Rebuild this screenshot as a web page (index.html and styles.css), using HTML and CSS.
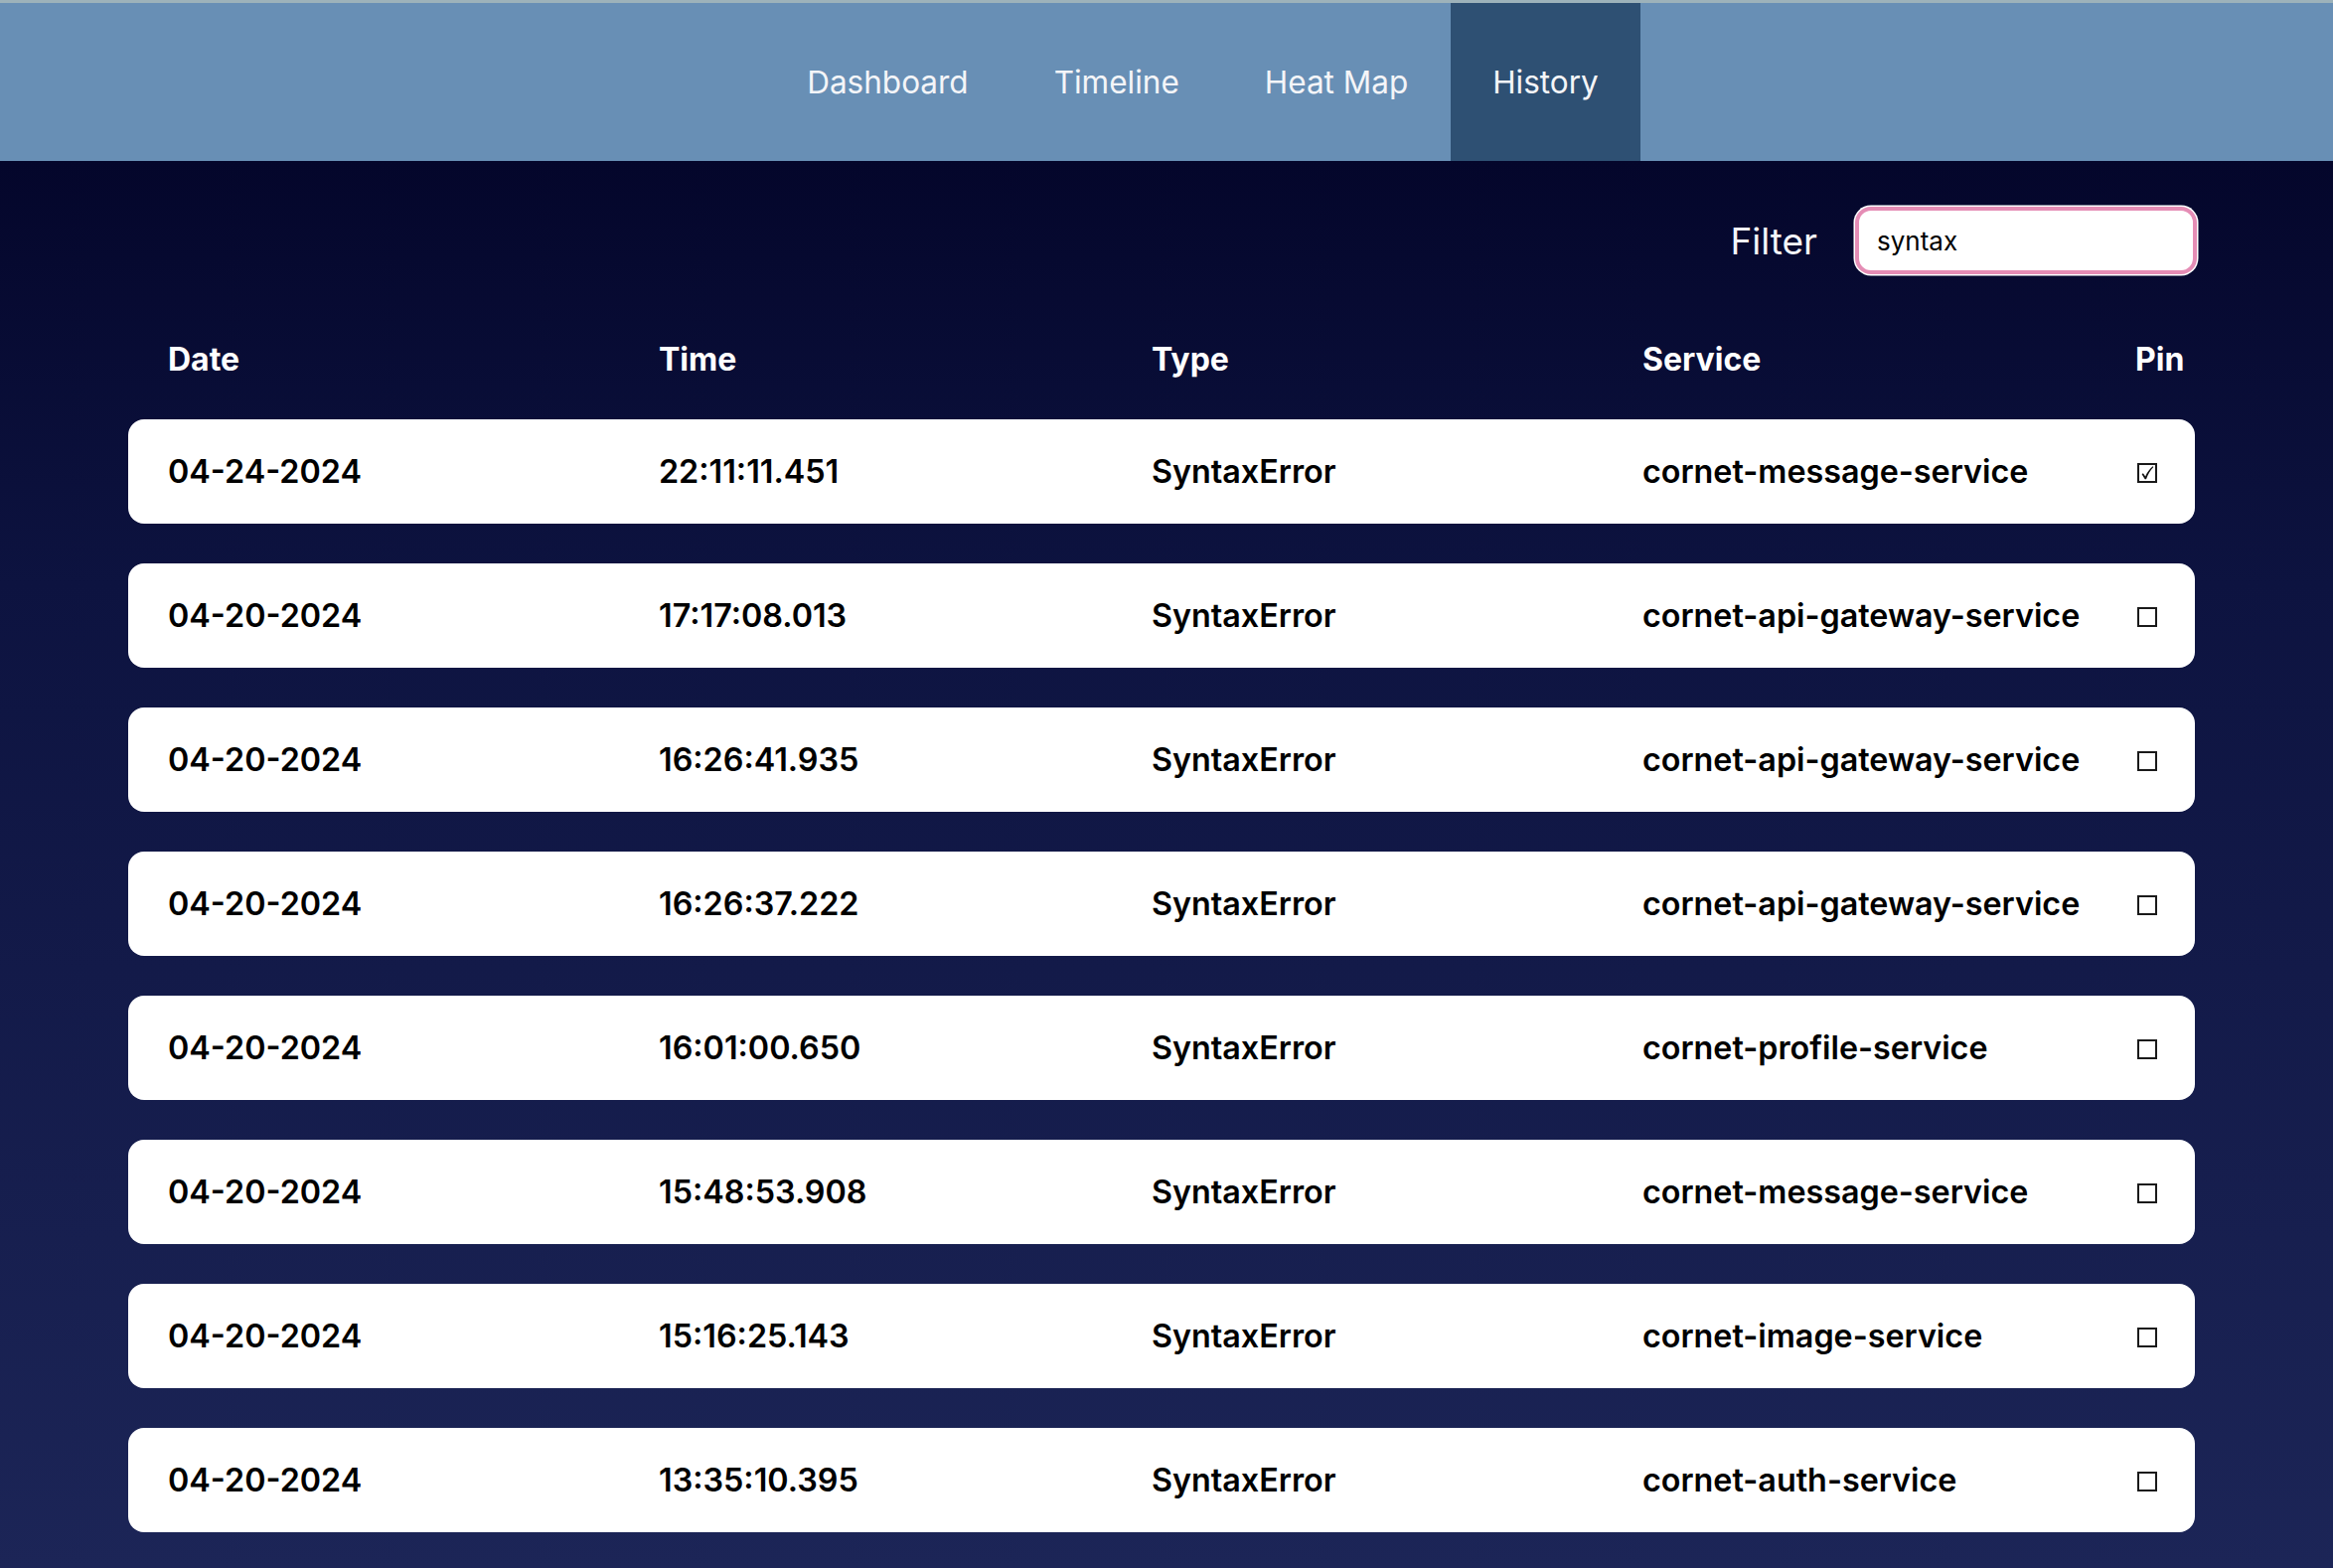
FILE: index.html
```html
<!DOCTYPE html>
<html lang="en">
<head>
<meta charset="utf-8">
<title>History</title>
<link rel="stylesheet" href="styles.css">
</head>
<body>
<nav class="nav">
  <a class="nav-link" href="#">Dashboard</a>
  <a class="nav-link" href="#">Timeline</a>
  <a class="nav-link" href="#">Heat Map</a>
  <a class="nav-link active" href="#">History</a>
</nav>
<main class="main">
  <div class="container">
    <div class="filter-row">
      <label class="filter-label" for="filter">Filter</label>
      <input class="filter-input" id="filter" type="text" value="syntax" autofocus>
    </div>
    <div class="table-head">
      <span>Date</span><span>Time</span><span>Type</span><span>Service</span><span>Pin</span>
    </div>
    <div class="rows">
      <div class="row"><span>04-24-2024</span><span>22:11:11.451</span><span>SyntaxError</span><span>cornet-message-service</span><span class="pin"><svg class="box" width="20" height="20" viewBox="0 0 20 20"><rect x="1" y="1" width="18" height="18" fill="#fff" stroke="#1a1a1a" stroke-width="2"/><path d="M4.6 11.2 L5.9 10.3 L8.2 13.4 C9.8 9.4 12.3 6 15.6 3.2 L16.3 3.9 C13.3 6.9 11 10.6 9 16.2 L7.7 16.2 Z" fill="#111"/></svg></span></div>
      <div class="row"><span>04-20-2024</span><span>17:17:08.013</span><span>SyntaxError</span><span>cornet-api-gateway-service</span><span class="pin"><svg class="box" width="20" height="20" viewBox="0 0 20 20"><rect x="1" y="1" width="18" height="18" fill="#fff" stroke="#1a1a1a" stroke-width="2"/></svg></span></div>
      <div class="row"><span>04-20-2024</span><span>16:26:41.935</span><span>SyntaxError</span><span>cornet-api-gateway-service</span><span class="pin"><svg class="box" width="20" height="20" viewBox="0 0 20 20"><rect x="1" y="1" width="18" height="18" fill="#fff" stroke="#1a1a1a" stroke-width="2"/></svg></span></div>
      <div class="row"><span>04-20-2024</span><span>16:26:37.222</span><span>SyntaxError</span><span>cornet-api-gateway-service</span><span class="pin"><svg class="box" width="20" height="20" viewBox="0 0 20 20"><rect x="1" y="1" width="18" height="18" fill="#fff" stroke="#1a1a1a" stroke-width="2"/></svg></span></div>
      <div class="row"><span>04-20-2024</span><span>16:01:00.650</span><span>SyntaxError</span><span>cornet-profile-service</span><span class="pin"><svg class="box" width="20" height="20" viewBox="0 0 20 20"><rect x="1" y="1" width="18" height="18" fill="#fff" stroke="#1a1a1a" stroke-width="2"/></svg></span></div>
      <div class="row"><span>04-20-2024</span><span>15:48:53.908</span><span>SyntaxError</span><span>cornet-message-service</span><span class="pin"><svg class="box" width="20" height="20" viewBox="0 0 20 20"><rect x="1" y="1" width="18" height="18" fill="#fff" stroke="#1a1a1a" stroke-width="2"/></svg></span></div>
      <div class="row"><span>04-20-2024</span><span>15:16:25.143</span><span>SyntaxError</span><span>cornet-image-service</span><span class="pin"><svg class="box" width="20" height="20" viewBox="0 0 20 20"><rect x="1" y="1" width="18" height="18" fill="#fff" stroke="#1a1a1a" stroke-width="2"/></svg></span></div>
      <div class="row"><span>04-20-2024</span><span>13:35:10.395</span><span>SyntaxError</span><span>cornet-auth-service</span><span class="pin"><svg class="box" width="20" height="20" viewBox="0 0 20 20"><rect x="1" y="1" width="18" height="18" fill="#fff" stroke="#1a1a1a" stroke-width="2"/></svg></span></div>
    </div>
  </div>
</main>
</body>
</html>
```

FILE: styles.css
```css
html, body {
  margin: 0;
  padding: 0;
  height: 100%;
}

body {
  font-family: Inter, "Noto Sans", sans-serif;
  background: #1c2557;
  overflow: hidden;
}

.nav {
  display: flex;
  justify-content: center;
  padding-left: 72px;
  height: 159px;
  border-top: 3px solid #9db2ba;
  background: #688fb5;
}

.nav-link {
  display: block;
  padding: 0 43px;
  line-height: 159px;
  font-size: 31.5px;
  font-weight: 400;
  color: #f4f5f8;
  text-decoration: none;
}

.nav-link.active {
  background: #2e5073;
  padding: 0 42px;
}

.main {
  min-height: calc(100vh - 162px);
  background: linear-gradient(180deg, #04062b 0%, #0d1340 30%, #1c2557 100%);
  padding-top: 45px;
  box-sizing: border-box;
}

.container {
  margin-left: 129px;
  width: 2080px;
}

.filter-row {
  display: flex;
  justify-content: flex-end;
  align-items: center;
  gap: 38px;
  height: 70px;
  margin-right: -2px;
}

.filter-label {
  font-size: 37px;
  color: #f4f5f8;
}

.filter-input {
  box-sizing: border-box;
  width: 344px;
  height: 68px;
  border: 4px solid #e58db5;
  border-radius: 16px;
  box-shadow: 0 0 0 1.5px #ffffff;
  padding: 0 18px;
  font-family: Inter, "Noto Sans", sans-serif;
  font-size: 26px;
  color: #000;
  caret-color: #000;
  background: #fff;
  outline: none;
}

.table-head,
.row {
  display: grid;
  grid-template-columns: 494px 496px 494px 496px 1fr;
  padding: 0 12px 0 40px;
  align-items: center;
  font-size: 32px;
}

.table-head {
  margin-top: 44px;
  height: 80px;
  color: #ffffff;
  font-weight: 700;
}

.rows {
  margin-top: 21px;
  display: flex;
  flex-direction: column;
  gap: 40px;
}

.row {
  height: 105px;
  background: #ffffff;
  border-radius: 16px;
  color: #000;
  font-size: 32.3px;
  font-weight: 600;
}

.pin {
  display: flex;
  align-items: center;
  padding-left: 2px;
  padding-top: 3px;
}

.box {
  display: block;
}
```
